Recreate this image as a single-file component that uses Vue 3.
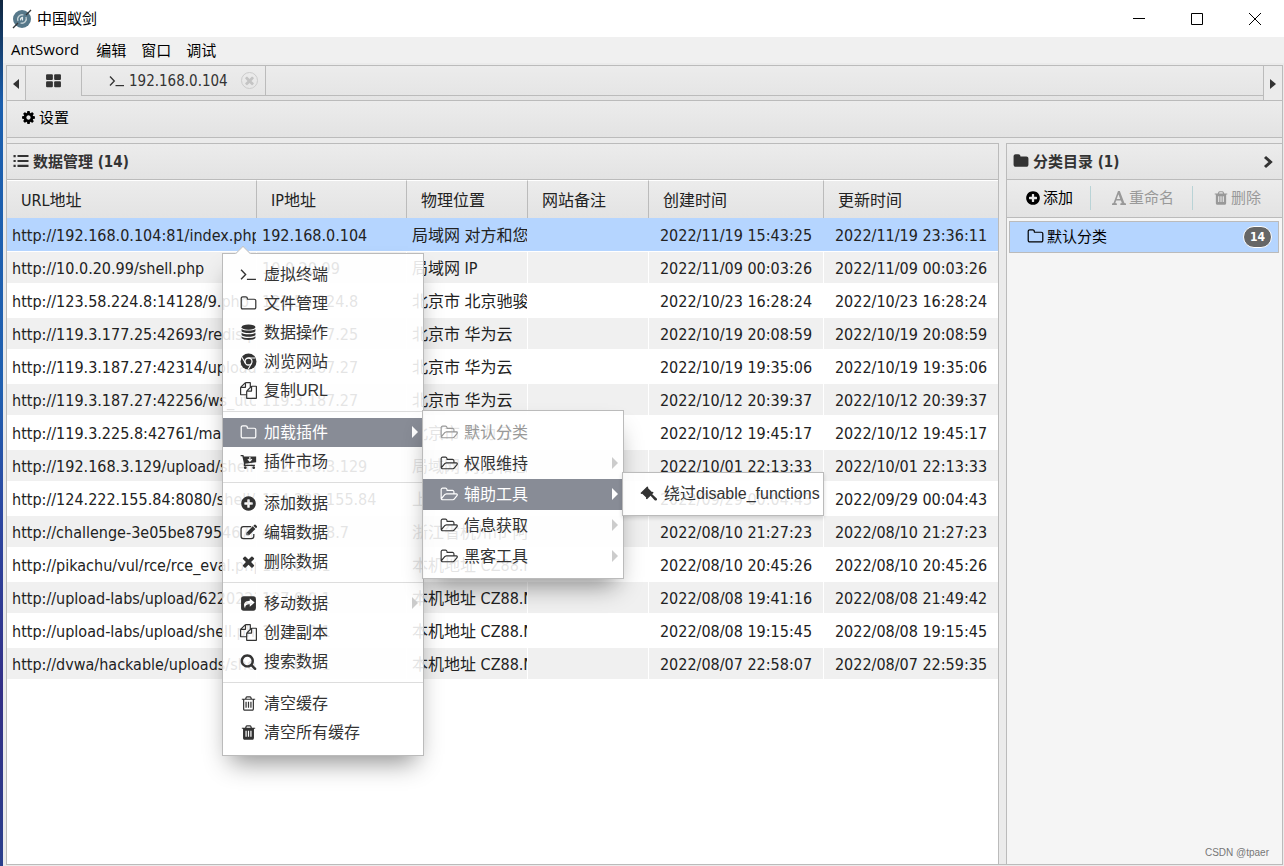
<script setup>
const menuBar = ['AntSword', '编辑', '窗口', '调试']
const columns = [
  { key: 'url', label: 'URL地址' },
  { key: 'ip', label: 'IP地址' },
  { key: 'place', label: '物理位置' },
  { key: 'note', label: '网站备注' },
  { key: 'created', label: '创建时间' },
  { key: 'updated', label: '更新时间' },
]
const raw = [
  ['http://192.168.0.104:81/index.php', '192.168.0.104', '局域网 对方和您', '2022/11/19 15:43:25', '2022/11/19 23:36:11'],
  ['http://10.0.20.99/shell.php', '10.0.20.99', '局域网 IP', '2022/11/09 00:03:26', '2022/11/09 00:03:26'],
  ['http://123.58.224.8:14128/9.php', '123.58.224.8', '北京市 北京驰骏', '2022/10/23 16:28:24', '2022/10/23 16:28:24'],
  ['http://119.3.177.25:42693/redis.php', '119.3.177.25', '北京市 华为云', '2022/10/19 20:08:59', '2022/10/19 20:08:59'],
  ['http://119.3.187.27:42314/upload/', '119.3.187.27', '北京市 华为云', '2022/10/19 19:35:06', '2022/10/19 19:35:06'],
  ['http://119.3.187.27:42256/ws_utc/', '119.3.187.27', '北京市 华为云', '2022/10/12 20:39:37', '2022/10/12 20:39:37'],
  ['http://119.3.225.8:42761/ma.php', '119.3.225.8', '北京市 华为云', '2022/10/12 19:45:17', '2022/10/12 19:45:17'],
  ['http://192.168.3.129/upload/shell', '192.168.3.129', '局域网 对方和您', '2022/10/01 22:13:33', '2022/10/01 22:13:33'],
  ['http://124.222.155.84:8080/shell/', '124.222.155.84', '上海市 腾讯云', '2022/09/29 00:04:43', '2022/09/29 00:04:43'],
  ['http://challenge-3e05be8795467f', '47.98.148.7', '浙江省杭州市 阿', '2022/08/10 21:27:23', '2022/08/10 21:27:23'],
  ['http://pikachu/vul/rce/rce_eval.php', '127.0.0.1', '本机地址 CZ88.NET', '2022/08/10 20:45:26', '2022/08/10 20:45:26'],
  ['http://upload-labs/upload/6220221', '127.0.0.1', '本机地址 CZ88.NET', '2022/08/08 19:41:16', '2022/08/08 21:49:42'],
  ['http://upload-labs/upload/shell.php', '127.0.0.1', '本机地址 CZ88.NET', '2022/08/08 19:15:45', '2022/08/08 19:15:45'],
  ['http://dvwa/hackable/uploads/shell', '127.0.0.1', '本机地址 CZ88.NET', '2022/08/07 22:58:07', '2022/08/07 22:59:35'],
]
const rows = raw.map(([url, ip, place, created, updated]) => ({ url, ip, place, note: '', created, updated }))

const mainMenu = [
  [
    { icon: 'terminal', label: '虚拟终端' },
    { icon: 'folder-o', label: '文件管理' },
    { icon: 'database', label: '数据操作' },
    { icon: 'chrome', label: '浏览网站' },
    { icon: 'files', label: '复制URL' },
  ],
  [
    { icon: 'folder-o', label: '加载插件', sub: true, active: true },
    { icon: 'cart', label: '插件市场' },
  ],
  [
    { icon: 'plus', label: '添加数据' },
    { icon: 'edit', label: '编辑数据' },
    { icon: 'times', label: '删除数据' },
  ],
  [
    { icon: 'share', label: '移动数据', sub: true },
    { icon: 'files', label: '创建副本' },
    { icon: 'search', label: '搜索数据' },
  ],
  [
    { icon: 'trash-o', label: '清空缓存' },
    { icon: 'trash', label: '清空所有缓存' },
  ],
]
const pluginMenu = [
  { label: '默认分类', disabled: true },
  { label: '权限维持', sub: true },
  { label: '辅助工具', sub: true, active: true },
  { label: '信息获取', sub: true },
  { label: '黑客工具', sub: true },
]
</script>

<template>
  <div class="desktop">
    <svg class="sprite" aria-hidden="true">
      <symbol id="i-folder-o" viewBox="0 0 1792 1792"><path d="M1600 1312v-704q0-40-28-68t-68-28h-704q-40 0-68-28t-28-68v-64q0-40-28-68t-68-28h-320q-40 0-68 28t-28 68v960q0 40 28 68t68 28h1216q40 0 68-28t28-68zm128-704v704q0 92-66 158t-158 66h-1216q-92 0-158-66t-66-158v-960q0-92 66-158t158-66h320q92 0 158 66t66 158v32h672q92 0 158 66t66 158z" /></symbol>
      <symbol id="i-folder" viewBox="0 0 1792 1792"><path d="M1728 608v704q0 92-66 158t-158 66h-1216q-92 0-158-66t-66-158v-960q0-92 66-158t158-66h320q92 0 158 66t66 158v32h672q92 0 158 66t66 158z" /></symbol>
      <symbol id="i-folder-open" viewBox="0 0 1984 1792"><path d="M1845 931q0-35-53-35h-1088q-40 0-85.500 21.500t-71.500 52.500l-294 363q-18 24-18 40 0 35 53 35h1088q40 0 86-22t71-53l294-363q18-22 18-39zm-1141-163h768v-160q0-40-28-68t-68-28h-576q-40 0-68-28t-28-68v-64q0-40-28-68t-68-28h-320q-40 0-68 28t-28 68v853l256-315q44-53 116-87.500t140-34.500zm1269 163q0 62-46 120l-295 363q-43 53-116 87.500t-140 34.500h-1088q-92 0-158-66t-66-158v-960q0-92 66-158t158-66h320q92 0 158 66t66 158v32h544q92 0 158 66t66 158v160h192q54 0 99 24.500t67 70.500q15 32 15 68z" /></symbol>
      <symbol id="i-plus" viewBox="0 0 1792 1792"><path d="M1344 960v-128q0-26-19-45t-45-19h-256v-256q0-26-19-45t-45-19h-128q-26 0-45 19t-19 45v256h-256q-26 0-45 19t-19 45v128q0 26 19 45t45 19h256v256q0 26 19 45t45 19h128q26 0 45-19t19-45v-256h256q26 0 45-19t19-45zm320-64q0 209-103 385.500t-279.500 279.500-385.500 103-385.500-103-279.500-279.500-103-385.500 103-385.500 279.500-279.500 385.500-103 385.500 103 279.500 279.500 103 385.500z" /></symbol>
      <symbol id="i-search" viewBox="0 0 1792 1792"><path d="M1216 832q0-185-131.500-316.500t-316.500-131.500-316.500 131.500-131.500 316.500 131.500 316.500 316.500 131.500 316.500-131.500 131.500-316.500zm512 832q0 52-38 90t-90 38q-54 0-90-38l-343-342q-179 124-399 124-143 0-273.500-55.500t-225-150-150-225-55.500-273.500 55.500-273.500 150-225 225-150 273.500-55.500 273.500 55.500 225 150 150 225 55.500 273.500q0 220-124 399l343 343q37 37 37 90z" /></symbol>
      <symbol id="i-times" viewBox="0 0 1792 1792"><path d="M1490 1322q0 40-28 68l-136 136q-28 28-68 28t-68-28l-294-294-294 294q-28 28-68 28t-68-28l-136-136q-28-28-28-68t28-68l294-294-294-294q-28-28-28-68t28-68l136-136q28-28 68-28t68 28l294 294 294-294q28-28 68-28t68 28l136 136q28 28 28 68t-28 68l-294 294 294 294q28 28 28 68z" /></symbol>
      <symbol id="i-cog" viewBox="0 0 1792 1792"><path d="M1152 896q0-106-75-181t-181-75-181 75-75 181 75 181 181 75 181-75 75-181zm512-109v222q0 12-8 23t-20 13l-185 28q-19 54-39 91 35 50 107 138 10 12 10 25t-9 23q-27 37-99 108t-94 71q-12 0-26-9l-138-108q-44 23-91 38-16 136-29 186-7 28-36 28h-222q-14 0-24.500-8.500t-11.500-21.500l-28-184q-49-16-90-37l-141 107q-10 9-25 9-14 0-25-11-126-114-165-168-7-10-7-23 0-12 8-23 15-21 51-66.500t54-70.500q-27-50-41-99l-183-27q-13-2-21-12.500t-8-23.500v-222q0-12 8-23t19-13l186-28q14-46 39-92-40-57-107-138-10-12-10-24 0-10 9-23 26-36 98.500-107.500t94.500-71.500q13 0 26 10l138 107q44-23 91-38 16-136 29-186 7-28 36-28h222q14 0 24.500 8.500t11.500 21.500l28 184q49 16 90 37l142-107q9-9 24-9 13 0 25 10 129 119 165 170 7 8 7 22 0 12-8 23-15 21-51 66.500t-54 70.500q26 50 41 98l183 28q13 2 21 12.500t8 23.500z" /></symbol>
      <symbol id="i-files" viewBox="0 0 1792 1792"><path d="M1696 384q40 0 68 28t28 68v1216q0 40-28 68t-68 28h-960q-40 0-68-28t-28-68v-288h-544q-40 0-68-28t-28-68v-672q0-40 20-88t48-76l408-408q28-28 76-48t88-20h416q40 0 68 28t28 68v328q68-40 128-40h416zm-544 213l-299 299h299v-299zm-640-384l-299 299h299v-299zm196 647l316-316v-416h-384v416q0 40-28 68t-68 28h-416v640h512v-256q0-40 20-88t48-76zm956 804v-1152h-384v416q0 40-28 68t-68 28h-416v640h896z" /></symbol>
      <symbol id="i-trash-o" viewBox="0 0 1792 1792"><path d="M704 736v576q0 14-9 23t-23 9h-64q-14 0-23-9t-9-23v-576q0-14 9-23t23-9h64q14 0 23 9t9 23zm256 0v576q0 14-9 23t-23 9h-64q-14 0-23-9t-9-23v-576q0-14 9-23t23-9h64q14 0 23 9t9 23zm256 0v576q0 14-9 23t-23 9h-64q-14 0-23-9t-9-23v-576q0-14 9-23t23-9h64q14 0 23 9t9 23zm128 724v-948h-896v948q0 22 7 40.500t14.500 27 10.500 8.500h832q3 0 10.500-8.500t14.500-27 7-40.500zm-672-1076h448l-48-117q-7-9-17-11h-317q-10 2-17 11zm928 32v64q0 14-9 23t-23 9h-96v948q0 83-47 143.500t-113 60.500h-832q-66 0-113-58.500t-47-141.500v-952h-96q-14 0-23-9t-9-23v-64q0-14 9-23t23-9h309l70-167q15-37 54-63t79-26h320q40 0 79 26t54 63l70 167h309q14 0 23 9t9 23z" /></symbol>
      <symbol id="i-trash" viewBox="0 0 1792 1792"><path fill-rule="evenodd" d="M1600 416v64q0 14-9 23t-23 9h-96v948q0 83-47 143.500t-113 60.500h-832q-66 0-113-58.500t-47-141.500v-952h-96q-14 0-23-9t-9-23v-64q0-14 9-23t23-9h309l70-167q15-37 54-63t79-26h320q40 0 79 26t54 63l70 167h309q14 0 23 9t9 23zM672 384h448l-48-117q-7-9-17-11h-317q-10 2-17 11zM576 704v640h128v-640zM832 704v640h128v-640zM1088 704v640h128v-640z" /></symbol>
      <symbol id="i-terminal" viewBox="0 0 16 16"><path d="M1 3.500 5.300 8 1 12.500" fill="none" stroke="currentColor" stroke-width="1.300" /><path d="M6.500 12h8.500v1.200H6.500z" /></symbol>
      <symbol id="i-database" viewBox="0 0 16 16"><ellipse cx="8" cy="3" rx="6.500" ry="2.500" /><path d="M1.500 4.700c2 2 11 2 13 0v2.100c-1 2.300-12 2.300-13 0zM1.500 8.200c2 2 11 2 13 0v2.100c-1 2.300-12 2.300-13 0zM1.500 11.700c2 2 11 2 13 0v1.500c-1 2.400-12 2.400-13 0z" /></symbol>
      <symbol id="i-chrome" viewBox="0 0 16 16"><circle cx="8" cy="8" r="7.500" /><g fill="none" stroke="#fff"><circle cx="8" cy="8" r="3.300" stroke-width="1.200" /><path d="M8 4.700h6.500M5.100 9.600 1.900 4.100M10.900 9.600 7.700 15.200" stroke-width="1" /></g></symbol>
      <symbol id="i-cart" viewBox="0 0 16 16"><path d="M.6 1.800h2.600l.5 1.400h11.500v5.600L5 10v1h9v1.300H3.600V9.500L2.200 3.100H.6z" /><circle cx="5" cy="13.800" r="1.300" /><circle cx="12.900" cy="13.800" r="1.300" /><path d="M9.300 3.800v3.300M7.400 5.700l1.900 1.900 1.900-1.900" fill="none" stroke="#fff" stroke-width="1.100" /></symbol>
      <symbol id="i-edit" viewBox="0 0 16 16"><path d="M10.500 2.400H3.200a2.200 2.200 0 0 0-2.200 2.200v7a2.200 2.200 0 0 0 2.200 2.200h7.600a2.200 2.200 0 0 0 2.200-2.200V9.300" fill="none" stroke="currentColor" stroke-width="1.200" /><path fill-rule="evenodd" d="m6 8.200 6-6 2.500 2.500-6 6H6zM7 8.700v1.200h1.200zM12.600 1.600l1-1q.5-.4 1 0l1.400 1.400q.5.500 0 1l-1 1z" /></symbol>
      <symbol id="i-share" viewBox="0 0 16 16"><path fill-rule="evenodd" d="M3.500 1.200h9a2.500 2.500 0 0 1 2.500 2.500v8.600a2.500 2.500 0 0 1-2.500 2.500h-9A2.500 2.500 0 0 1 1 12.300V3.700a2.500 2.500 0 0 1 2.500-2.500zM9.200 3.300v2.200C4.300 5.600 2.600 8.400 4.800 12.700c.1-3 1.300-4 4.400-4V11l4.600-3.900z" /></symbol>
      <symbol id="i-gavel" viewBox="0 0 16 16"><path d="M.5 6.500 6.700.4l1.100.6-.3.900 3.700 3.700.9-.3.700 1-6.200 6.200-1-.6.200-1-3.700-3.700-1 .3z" /><path d="m9.300 8.500 1.500-1.500 5 4.800q.5 1.200-.3 1.700-.8.500-1.700-.2z" /></symbol>
      <symbol id="i-list" viewBox="0 0 16 16"><path d="M.5 2h2.200v2.200H.5zM.5 6.900h2.200v2.200H.5zM.5 11.800h2.200V14H.5zM4.500 2h11v2.100h-11zM4.500 6.900h11V9h-11zM4.500 11.800h11v2.100h-11z" /></symbol>
      <symbol id="i-grid" viewBox="0 0 16 16"><rect x="1" y="2" width="6.400" height="5.500" rx="1" /><rect x="8.600" y="2" width="6.400" height="5.500" rx="1" /><rect x="1" y="8.800" width="6.400" height="5.500" rx="1" /><rect x="8.600" y="8.800" width="6.400" height="5.500" rx="1" /></symbol>
      <symbol id="i-font" viewBox="0 0 16 16"><path fill-rule="evenodd" d="M7 1h1.800l4.600 12 1.600.5V15H9.300v-1.500l1.500-.5-.9-2.600H5.200L4.300 13l1.600.5V15H1v-1.500l1.500-.5zM7.400 4.200 5.700 9h3.500z" /></symbol>
      <symbol id="i-chevron" viewBox="0 0 16 16"><path d="m5 3 5.500 5L5 13" fill="none" stroke="currentColor" stroke-width="3" /></symbol>
    </svg>

    <div class="window">
      <header class="titlebar">
        <svg class="logo" viewBox="0 0 20 20" aria-hidden="true">
          <circle cx="10" cy="10" r="9" fill="#56788a" />
          <path d="M6 12a4.500 4.500 0 0 1 5.500-6M14 8a4.500 4.500 0 0 1-5.500 6" fill="none" stroke="#c3d0d5" stroke-width="1.300" />
          <path d="M8.600 11.400q-.4-2.600 1.900-3v3" fill="none" stroke="#e5ecee" stroke-width="1.200" />
          <path d="M1 19 6 14M14 6 19 1" stroke="#34383b" stroke-width="1.400" />
        </svg>
        <h1>中国蚁剑</h1>
        <button class="win" aria-label="最小化"><svg viewBox="0 0 12 12"><path d="M0 5.500h12" /></svg></button>
        <button class="win" aria-label="最大化"><svg viewBox="0 0 12 12"><path d="M.5.500h11v11H.5z" /></svg></button>
        <button class="win" aria-label="关闭"><svg viewBox="0 0 12 12"><path d="m0 0 12 12M12 0 0 12" /></svg></button>
      </header>

      <nav class="menubar">
        <button v-for="m in menuBar" :key="m">{{ m }}</button>
      </nav>

      <div class="app">
        <div class="tabs">
          <button class="scroll left" aria-label="向左滚动"><i></i></button>
          <button class="tab home" aria-label="主页"><svg><use href="#i-grid" /></svg></button>
          <div class="tab session">
            <button><svg><use href="#i-terminal" /></svg>192.168.0.104</button>
            <button class="close" aria-label="关闭标签"><svg><use href="#i-times" /></svg></button>
          </div>
          <div class="filler"></div>
          <button class="scroll right" aria-label="向右滚动"><i></i></button>
        </div>

        <div class="toolbar">
          <button><svg><use href="#i-cog" /></svg>设置</button>
        </div>

        <div class="panels">
          <main class="panel data">
            <h2><svg><use href="#i-list" /></svg>数据管理 (14)</h2>
            <table>
              <colgroup>
                <col class="c-url"><col class="c-ip"><col class="c-mid"><col class="c-mid"><col class="c-time"><col>
              </colgroup>
              <thead>
                <tr><th v-for="c in columns" :key="c.key">{{ c.label }}</th></tr>
              </thead>
              <tbody>
                <tr v-for="(r, i) in rows" :key="i" :class="{ selected: i === 0 }">
                  <td v-for="c in columns" :key="c.key" :class="c.key">{{ r[c.key] }}</td>
                </tr>
              </tbody>
            </table>
          </main>

          <aside class="panel category">
            <h2><svg><use href="#i-folder" /></svg>分类目录 (1)<svg class="chev"><use href="#i-chevron" /></svg></h2>
            <div class="actions">
              <button class="add"><svg><use href="#i-plus" /></svg>添加</button>
              <button class="rename" disabled><svg><use href="#i-font" /></svg>重命名</button>
              <button class="remove" disabled><svg><use href="#i-trash" /></svg>删除</button>
            </div>
            <button class="folder"><svg><use href="#i-folder-o" /></svg>默认分类<span class="badge">14</span></button>
            <footer>CSDN @tpaer</footer>
          </aside>
        </div>
      </div>
    </div>

    <div class="menu main">
      <div v-for="(group, g) in mainMenu" :key="g" class="group">
        <button v-for="item in group" :key="item.label" :class="{ active: item.active }">
          <svg><use :href="'#i-' + item.icon" /></svg>{{ item.label }}<i v-if="item.sub"></i>
        </button>
      </div>
    </div>
    <div class="menu plugins">
      <button v-for="item in pluginMenu" :key="item.label" :class="{ active: item.active }" :disabled="item.disabled">
        <svg><use href="#i-folder-open" /></svg>{{ item.label }}<i v-if="item.sub"></i>
      </button>
    </div>
    <div class="menu tools">
      <button><svg><use href="#i-gavel" /></svg>绕过disable_functions</button>
    </div>
  </div>
</template>

<style>
body {
  overflow: hidden;
}
</style>

<style scoped>
.desktop {
  position: relative;
  display: flex;
  height: 100vh;
  padding-left: 3px;
  box-sizing: border-box;
  background: linear-gradient(#10263f, #1b5fae 12%, #2160b0 45%, #2c46a0 60%, #332f86 80%, #2a3f8c);
  font: 16px "DejaVu Sans Condensed", "Noto Sans CJK SC", sans-serif;
  color: #222;
}
.desktop *, .desktop *::before {
  box-sizing: border-box;
}
.sprite {
  position: absolute;
  width: 0;
  height: 0;
}
svg {
  flex: none;
  fill: currentColor;
}
button {
  display: flex;
  align-items: center;
  padding: 0;
  border: 0;
  background: none;
  font: inherit;
  color: inherit;
  white-space: nowrap;
}
.window {
  flex: 1;
  min-width: 0;
  display: flex;
  flex-direction: column;
  background: #ebebeb;
}
.titlebar {
  display: flex;
  align-items: center;
  height: 37px;
  padding-left: 9px;
  background: #fff;
  color: #000;
}
.logo {
  width: 20px;
  height: 20px;
}
h1 {
  flex: 1;
  margin: 0 0 0 5px;
  padding-bottom: 2px;
  font-size: 15px;
  font-weight: 400;
}
.win {
  justify-content: center;
  width: 58px;
  height: 36px;
}
.win svg {
  width: 12px;
  height: 12px;
  fill: none;
  stroke: #000;
}
.menubar {
  display: flex;
  gap: 15px;
  height: 26px;
  padding: 0 0 2px 8px;
  background: #f0f0f0;
  color: #000;
  font: 15px "Open Sans", "Noto Sans CJK SC", sans-serif;
}
.menubar button:first-child {
  margin-right: 2px;
}
.app {
  flex: 1;
  min-height: 0;
  display: flex;
  flex-direction: column;
  margin: 2px 1px 1px 3px;
  border: 1px solid #bbb;
}
.tabs {
  display: flex;
  align-items: flex-start;
  height: 35px;
  border-bottom: 1px solid #bbb;
  background: linear-gradient(#ececec, #e4e4e4);
  font-size: 15px;
  color: #333;
}
.scroll {
  justify-content: center;
  width: 19px;
  height: 34px;
  padding-top: 2px;
  background: #ebebeb;
}
.scroll i {
  border: 5px solid transparent;
}
.left {
  border-right: 1px solid #bbb;
}
.left i {
  border-right: 6px solid #333;
  border-left: 0;
}
.right {
  border-left: 1px solid #bbb;
}
.right i {
  border-left: 6px solid #333;
  border-right: 0;
}
.home {
  justify-content: center;
  width: 55px;
  height: 30px;
  padding-bottom: 2px;
}
.home svg {
  width: 17px;
  height: 17px;
}
.session {
  display: flex;
  align-items: center;
  width: 185px;
  height: 30px;
  padding-left: 27px;
  border: 1px solid #bbb;
  border-top: 0;
}
.session svg {
  width: 16px;
  height: 16px;
  margin-right: 4px;
}
.session .close {
  justify-content: center;
  width: 17px;
  height: 17px;
  margin: 0 7px 0 auto;
  border: 1px solid #ccc;
  border-radius: 50%;
  color: #c4c4c4;
}
.session .close svg {
  width: 13px;
  height: 13px;
  margin: 0;
}
.filler {
  flex: 1;
  height: 30px;
  border-bottom: 1px solid #bbb;
}
.toolbar {
  display: flex;
  height: 37px;
  padding: 0 0 5px 14px;
  border-bottom: 1px solid #bbb;
  background: linear-gradient(#ececec, #e3e3e3);
  font-size: 15px;
  color: #000;
}
.toolbar svg {
  width: 15px;
  height: 15px;
  margin: 2px 3px 0 0;
}
.panels {
  flex: 1;
  min-height: 0;
  display: flex;
  gap: 7px;
  padding-top: 5px;
}
.panel {
  border-top: 1px solid #bbb;
  overflow: hidden;
}
.data {
  flex: 1;
  min-width: 0;
  border-right: 1px solid #bbb;
  background: #fff;
}
.category {
  display: flex;
  flex-direction: column;
  width: 276px;
  border-left: 1px solid #bbb;
  background: #f5f5f5;
}
h2 {
  display: flex;
  align-items: center;
  height: 36px;
  margin: 0;
  padding: 0 0 2px 6px;
  border-bottom: 1px solid #bbb;
  background: linear-gradient(#ececec, #e3e3e3);
  font-size: 15px;
  font-weight: 700;
  color: #333;
}
h2 svg {
  width: 16px;
  height: 16px;
  margin-right: 4px;
}
h2 .chev {
  margin: 2px 6px 0 auto;
}
table {
  width: 100%;
  table-layout: fixed;
  border-spacing: 0;
}
.c-url {
  width: 250px;
}
.c-ip {
  width: 150px;
}
.c-mid {
  width: 121px;
}
.c-time {
  width: 175px;
}
th {
  height: 38px;
  padding: 0 0 2px 14px;
  border-top: 1px solid #fff;
  border-right: 1px solid #bbb;
  background: linear-gradient(#ececec, #e3e3e3);
  font-weight: 400;
  text-align: left;
}
td {
  height: 33px;
  padding: 2px 0 0 5px;
  border: solid #fff;
  border-width: 1px 1px 1px 0;
  overflow: hidden;
  line-height: 24px;
  white-space: nowrap;
}
th:last-child, td:last-child {
  border-right: 0;
}
tr:nth-child(even) td {
  background: #f0f0f0;
}
.selected td {
  border-color: #b5d5ff;
  background: #b5d5ff;
}
.created, .updated {
  padding-left: 0;
  text-align: center;
}
.actions {
  display: flex;
  height: 38px;
  border-bottom: 1px solid #bbb;
  background: linear-gradient(#ececec, #e3e3e3);
  font-size: 15px;
  color: #000;
}
.actions button {
  height: 24px;
  margin-top: 6px;
  padding-bottom: 3px;
}
.actions svg {
  width: 16px;
  height: 16px;
  margin: 2px 2px 0 0;
}
.actions :disabled {
  padding-left: 20px;
  border-left: 1px solid #b9d3d6;
  color: #999;
}
.add {
  width: 83px;
  padding-left: 18px;
}
.rename {
  width: 102px;
}
.folder {
  height: 32px;
  margin: 3px 3px 0 2px;
  padding: 0 6px 3px 17px;
  border: 1px solid #bbb;
  background: #b5d5ff;
  font-size: 15px;
  color: #000;
}
.folder svg {
  width: 17px;
  height: 17px;
  margin: 2px 3px 0 0;
}
.badge {
  width: 29px;
  height: 22px;
  margin: 2px 0 0 auto;
  border: 1px solid #fff;
  border-radius: 11px;
  background: #666;
  color: #fff;
  font-size: 12px;
  font-weight: 700;
  line-height: 20px;
}
footer {
  margin-top: auto;
  padding: 0 13px 6px 0;
  font: 10px "Liberation Sans", sans-serif;
  color: #777;
  text-align: right;
}
.menu {
  position: absolute;
  width: 202px;
  border: 1px solid #bbb;
  background: rgba(255, 255, 255, .88);
  box-shadow: 0 14px 24px -8px rgba(0, 0, 0, .45);
  font: 16px "Liberation Sans", "Noto Sans CJK SC", sans-serif;
  color: #333;
}
.menu button {
  width: 100%;
  height: 29px;
  padding: 0 5px 4px 17px;
}
.menu svg {
  width: 17px;
  height: 17px;
  margin: 4px 7px 0 0;
}
.menu i {
  margin: 2px 0 0 auto;
  border: 6px solid transparent;
  border-left: 6px solid #ccc;
  border-right: 0;
}
.menu .active {
  background: #888c96;
  color: #fff;
}
.menu .active i {
  border-left-color: #fff;
}
.menu :disabled {
  color: #999;
}
.main {
  top: 253px;
  left: 222px;
  padding: 6px 0 8px;
}
.main::before {
  content: "";
  position: absolute;
  top: -6px;
  left: 14px;
  width: 12px;
  height: 12px;
  border: solid #bbb;
  border-width: 1px 0 0 1px;
  background: #fff;
  transform: rotate(45deg);
  clip-path: polygon(0 0, 100% 0, 0 100%);
}
.group + .group {
  margin-top: 6px;
  padding-top: 6px;
  border-top: 1px solid #ddd;
}
.plugins {
  top: 410px;
  left: 422px;
  padding: 6px 0;
}
.plugins button {
  height: 31px;
}
.plugins svg {
  width: 18px;
  margin-right: 6px;
}
.tools {
  top: 472px;
  left: 622px;
  padding: 6px 0;
  box-shadow: 0 2px 4px rgba(0, 0, 0, .15);
}
.tools button {
  height: 30px;
  padding-right: 0;
}
</style>
